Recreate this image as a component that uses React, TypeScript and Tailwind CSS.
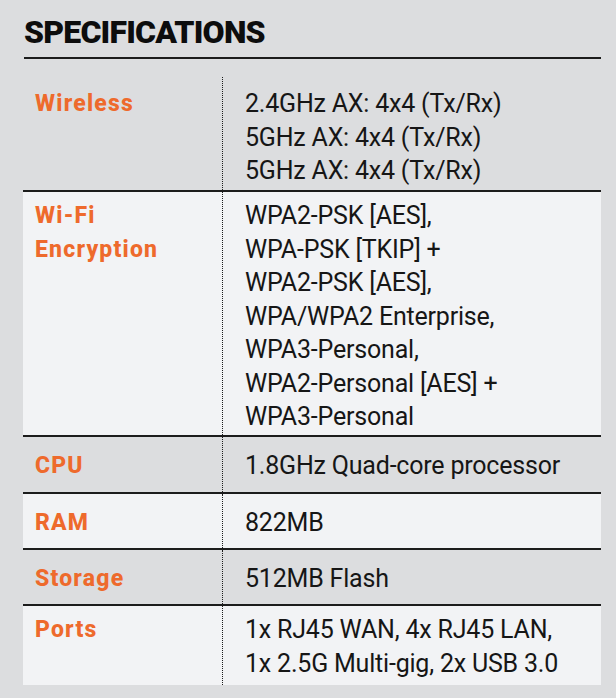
import React from "react";

type Row = {
  label: string[];
  value: string[];
  light: boolean;
  h: string;
  pt: string;
  top: boolean;
};

const rows: Row[] = [
  {
    label: ["Wireless"],
    value: ["2.4GHz AX: 4x4 (Tx/Rx)", "5GHz AX: 4x4 (Tx/Rx)", "5GHz AX: 4x4 (Tx/Rx)"],
    light: false,
    h: "h-[113px]",
    pt: "pt-[10px]",
    top: false,
  },
  {
    label: ["Wi-Fi", "Encryption"],
    value: [
      "WPA2-PSK [AES],",
      "WPA-PSK [TKIP] +",
      "WPA2-PSK [AES],",
      "WPA/WPA2 Enterprise,",
      "WPA3-Personal,",
      "WPA2-Personal [AES] +",
      "WPA3-Personal",
    ],
    light: true,
    h: "h-[245px]",
    pt: "pt-[7px]",
    top: true,
  },
  {
    label: ["CPU"],
    value: ["1.8GHz Quad-core processor"],
    light: false,
    h: "h-[57px]",
    pt: "pt-[12px]",
    top: true,
  },
  {
    label: ["RAM"],
    value: ["822MB"],
    light: true,
    h: "h-[56px]",
    pt: "pt-[12px]",
    top: true,
  },
  {
    label: ["Storage"],
    value: ["512MB Flash"],
    light: false,
    h: "h-[56px]",
    pt: "pt-[12px]",
    top: true,
  },
  {
    label: ["Ports"],
    value: ["1x RJ45 WAN, 4x RJ45 LAN,", "1x 2.5G Multi-gig, 2x USB 3.0"],
    light: true,
    h: "h-[81px]",
    pt: "pt-[7px]",
    top: true,
  },
];

export default function App() {
  return (
    <div
      className="min-h-[698px] w-[616px] bg-[#dcdddf] pl-[23px] pt-[16px]"
      style={{ fontFamily: "Roboto, 'Liberation Sans', sans-serif" }}
    >
      <div className="w-[578px]">
        <h1 className="text-[32px] leading-[32px] font-black tracking-[-0.8px] text-[#0d0d0d] pl-[1px]">
          SPECIFICATIONS
        </h1>
        <div className="mt-[9px] h-[2px] bg-[#1c1c1c] ml-[1px]" />
        <div className="mt-[18px] flex flex-col">
          {rows.map((r, i) => (
            <div
              key={i}
              className={`grid grid-cols-[199px_1fr] border-[#1c1c1c] ${r.light ? "bg-[#f2f3f5]" : "bg-[#dcdddf]"} ${r.top ? "border-t-2" : ""} ${r.h}`}
            >
              <div
                className={`pl-[12px] text-[23px] leading-[33.5px] font-extrabold tracking-[1.2px] text-[#ee6a2c] ${r.pt}`}
              >
                {r.label.map((l, j) => (
                  <div key={j}>{l}</div>
                ))}
              </div>
              <div
                className={`border-l border-dotted border-[#1c1c1c] pl-[22px] text-[25px] leading-[33.5px] tracking-[-0.2px] text-[#161616] ${r.pt}`}
              >
                {r.value.map((v, j) => (
                  <div key={j}>{v}</div>
                ))}
              </div>
            </div>
          ))}
        </div>
      </div>
    </div>
  );
}
